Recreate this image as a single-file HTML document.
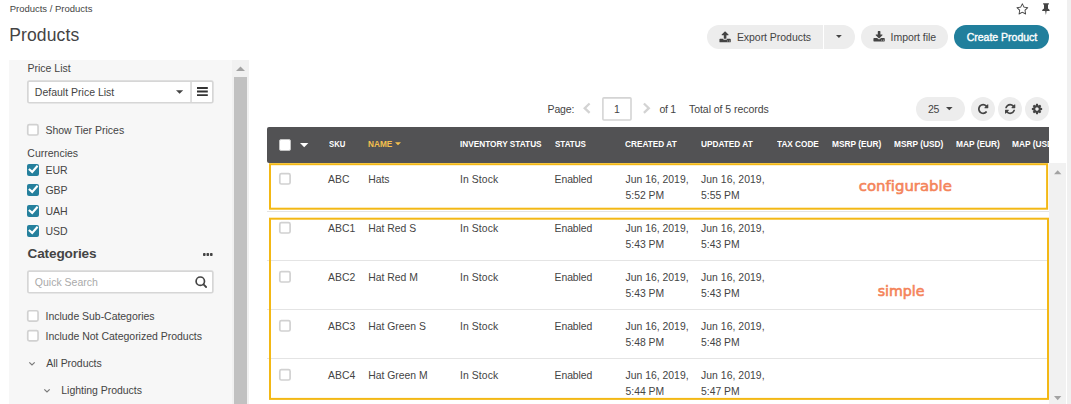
<!DOCTYPE html>
<html lang="en">
<head>
<meta charset="utf-8">
<title>Products</title>
<style>
html,body{margin:0;padding:0;background:#fff;}
body{width:1071px;height:404px;position:relative;overflow:hidden;font-family:"Liberation Sans",Arial,sans-serif;color:#444;}
.t{position:absolute;white-space:nowrap;line-height:1;color:#444;}
.a{position:absolute;box-sizing:border-box;}
.cb{position:absolute;box-sizing:border-box;width:11px;height:11px;border:1px solid #ccc;border-radius:2px;background:#fff;}
.cbc{position:absolute;width:12px;height:12px;border-radius:2px;background:#25809d;}
.sep{position:absolute;left:267px;width:782px;height:1px;background:#e4e4e4;}
.ybox{position:absolute;box-sizing:border-box;border:2px solid #f1b616;}
svg{position:absolute;overflow:visible;}
</style>
</head>
<body>
<!-- right page strip -->
<div class="a" style="left:1067px;top:0;width:4px;height:404px;background:#f0f0f0;"></div>

<!-- sidebar -->
<div class="a" style="left:9px;top:60px;width:223px;height:344px;background:#f7f7f7;"></div>
<div class="a" style="left:232px;top:60px;width:17px;height:344px;background:#f1f1f1;"></div>
<div class="a" style="left:234px;top:77px;width:13px;height:327px;background:#c1c1c1;"></div>
<svg style="left:236px;top:66px" width="9" height="5" viewBox="0 0 9 5"><path d="M0 5L4.5 0.5L9 5Z" fill="#a3a3a3"/></svg>

<!-- price list select -->
<svg style="left:0;top:0" width="260" height="404" viewBox="0 0 260 404"><rect x="27.85" y="81.05" width="185" height="21.7" rx="1.5" fill="#fff" stroke="#d6d6d6" stroke-width="1.7"/><rect x="190.3" y="81" width="1.5" height="22" fill="#d6d6d6"/></svg>

<svg style="left:175.8px;top:90px" width="7.2" height="3.9" viewBox="0 0 10 5"><path d="M0 0H10L5 5Z" fill="#444"/></svg>
<svg style="left:196.5px;top:87.1px" width="10.8" height="9.1" viewBox="0 0 12 10"><path d="M0 0H12V2.1H0ZM0 3.95H12V6.05H0ZM0 7.9H12V10H0Z" fill="#333"/></svg>

<!-- checkboxes -->
<div class="cbc" style="left:27px;top:164px"></div>
<div class="cbc" style="left:27px;top:184px"></div>
<div class="cbc" style="left:27px;top:205px"></div>
<div class="cbc" style="left:27px;top:225px"></div>
<svg style="left:27px;top:164px" width="12" height="73" viewBox="0 0 12 73" fill="none" stroke="#fff" stroke-width="2.1" stroke-linecap="butt" stroke-linejoin="miter">
<path d="M1.9 5L5.2 7.9L10.6 1.8"/>
<path d="M1.9 25L5.2 27.9L10.6 21.8"/>
<path d="M1.9 46L5.2 48.9L10.6 42.8"/>
<path d="M1.9 66L5.2 68.9L10.6 62.8"/>
</svg>

<!-- categories dots -->
<svg style="left:203.4px;top:252.8px" width="9.6" height="3" viewBox="0 0 9.6 3"><rect x="0" y="0" width="2.6" height="3" rx=".8" fill="#444"/><rect x="3.5" y="0" width="2.6" height="3" rx=".8" fill="#444"/><rect x="7" y="0" width="2.6" height="3" rx=".8" fill="#444"/></svg>

<!-- quick search -->
<svg style="left:0;top:0" width="260" height="404" viewBox="0 0 260 404"><rect x="27.85" y="271.05" width="185" height="21.7" rx="1.5" fill="#fff" stroke="#d6d6d6" stroke-width="1.7"/><g fill="none" stroke="#444"><circle cx="200.3" cy="281.2" r="4.2" stroke-width="1.7"/><path d="M203.5 284.4L206.1 287" stroke-width="1.8" stroke-linecap="round"/></g></svg>



<!-- tree chevrons -->
<svg style="left:28.8px;top:361.6px" width="6" height="3.4" viewBox="0 0 6 3.4" fill="none" stroke="#7a7a7a" stroke-width="1.2"><path d="M0.3 0.3L3 3L5.7 0.3"/></svg>
<svg style="left:44.3px;top:388.6px" width="6" height="3.4" viewBox="0 0 6 3.4" fill="none" stroke="#7a7a7a" stroke-width="1.2"><path d="M0.3 0.3L3 3L5.7 0.3"/></svg>

<!-- top right icons -->
<svg style="left:1015.5px;top:2.6px" width="12.7" height="12.7" viewBox="0 0 1792 1792"><path fill="#444" d="M1201 1004l306-297-422-62-189-382-189 382-422 62 306 297-73 421 378-199 377 199zm527-357q0 22-26 48l-363 354 86 500q1 7 1 20 0 50-41 50-19 0-40-12l-449-236-449 236q-22 12-40 12-21 0-31.500-14.500t-10.500-35.500q0-6 2-20l86-500-364-354q-25-27-25-48 0-37 56-46l502-73 225-455q19-41 49-41t49 41l225 455 502 73q56 9 56 46z"/></svg>
<svg style="left:1042.1px;top:3px" width="7.8" height="12" viewBox="0 0 7.8 12"><path fill="#444" d="M1.1 0.3H6.9V1.6H6V5.6Q7.6 6.3 7.8 7.9H4.6L3.9 12L3.2 7.9H0Q0.2 6.3 2 5.6V1.6H1.1Z"/></svg>

<!-- buttons -->
<div class="a" style="left:707px;top:24.7px;width:116px;height:24.3px;background:#ededed;border-radius:12.2px 0 0 12.2px;"></div>
<div class="a" style="left:824px;top:24.7px;width:31px;height:24.3px;background:#ededed;border-radius:0 12.2px 12.2px 0;"></div>
<div class="a" style="left:860.7px;top:24.7px;width:87.4px;height:24.3px;background:#ededed;border-radius:12.2px;"></div>
<div class="a" style="left:953.8px;top:24.7px;width:95.4px;height:24.3px;background:#217f9c;border-radius:12.2px;"></div>
<svg style="left:836.4px;top:35.4px" width="5.8" height="3" viewBox="0 0 10 5"><path d="M0 0H10L5 5Z" fill="#444"/></svg>
<!-- upload icon -->
<svg style="left:719px;top:31px" width="12.2" height="12.2" viewBox="0 0 1792 1792"><path fill="#444" d="M1344 1472q0-26-19-45t-45-19-45 19-19 45 19 45 45 19 45-19 19-45zm256 0q0-26-19-45t-45-19-45 19-19 45 19 45 45 19 45-19 19-45zm128-224v320q0 40-28 68t-68 28h-1472q-40 0-68-28t-28-68v-320q0-40 28-68t68-28h427q21 56 70.500 92t110.500 36h256q61 0 110.500-36t70.500-92h427q40 0 68 28t28 68zm-325-648q-17 40-59 40h-256v448q0 26-19 45t-45 19h-256q-26 0-45-19t-19-45v-448h-256q-42 0-59-40-17-39 14-69l448-448q18-19 45-19t45 19l448 448q31 30 14 69z"/></svg>
<!-- download icon -->
<svg style="left:872.5px;top:30.6px" width="12.2" height="12.2" viewBox="0 0 1792 1792"><path fill="#444" d="M1344 1344q0-26-19-45t-45-19-45 19-19 45 19 45 45 19 45-19 19-45zm256 0q0-26-19-45t-45-19-45 19-19 45 19 45 45 19 45-19 19-45zm128-224v320q0 40-28 68t-68 28h-1472q-40 0-68-28t-28-68v-320q0-40 28-68t68-28h465l135 136q58 56 136 56t136-56l136-136h464q40 0 68 28t28 68zm-325-569q17 41-14 70l-448 448q-18 19-45 19t-45-19l-448-448q-31-29-14-70 17-39 59-39h256v-448q0-26 19-45t45-19h256q26 0 45 19t19 45v448h256q42 0 59 39z"/></svg>

<!-- pagination -->
<svg style="left:575px;top:92px" width="90" height="34" viewBox="575 92 90 34" fill="none">
<path d="M589.6 103.5L584.7 108.2L589.6 112.9" stroke="#d3d3d3" stroke-width="2.3"/>
<path d="M643.9 103.5L648.8 108.2L643.9 112.9" stroke="#d3d3d3" stroke-width="2.3"/>
<rect x="602.9" y="97.85" width="28.1" height="22.2" rx="1" fill="#fff" stroke="#d4d4d4" stroke-width="1.6"/>
</svg>

<!-- toolbar -->
<div class="a" style="left:916px;top:96.8px;width:49px;height:24px;background:#ededed;border-radius:12px;"></div>
<svg style="left:946.2px;top:107.2px" width="6.6" height="3.3" viewBox="0 0 10 5"><path d="M0 0H10L5 5Z" fill="#444"/></svg>
<div class="a" style="left:971px;top:96.7px;width:24px;height:24px;background:#ededed;border-radius:12px;"></div>
<div class="a" style="left:998px;top:96.7px;width:24px;height:24px;background:#ededed;border-radius:12px;"></div>
<div class="a" style="left:1025px;top:96.7px;width:24px;height:24px;background:#ededed;border-radius:12px;"></div>
<svg style="left:977.6px;top:102.6px" width="10.3" height="12" viewBox="0 0 1536 1792"><path fill="#444" d="M1536 256v448q0 26-19 45t-45 19h-448q-42 0-59-40-17-39 14-69l138-138q-148-137-349-137-104 0-198.500 40.500t-163.500 109.500-109.500 163.500-40.500 198.500 40.500 198.500 109.500 163.500 163.500 109.500 198.500 40.500q119 0 225-52t179-147q7-10 23-12 15 0 25 9l137 138q9 8 9.500 20.500t-7.500 22.500q-109 132-264 204.500t-327 72.500q-156 0-298-61t-245-164-164-245-61-298 61-298 164-245 245-164 298-61q147 0 284.500 55.500t244.500 156.500l130-129q29-31 70-14 39 17 39 59z"/></svg>
<svg style="left:1004.9px;top:102.6px" width="10.3" height="12" viewBox="0 0 1536 1792"><path fill="#444" d="M1511 1056q0 5-1 7-64 268-268 434.500t-478 166.500q-146 0-282.500-55t-243.500-157l-129 129q-19 19-45 19t-45-19-19-45v-448q0-26 19-45t45-19h448q26 0 45 19t19 45-19 45l-137 137q71 66 161 102t187 36q134 0 250-65t186-179q11-17 53-117 8-23 30-23h192q13 0 22.500 9.500t9.500 22.500zm25-800v448q0 26-19 45t-45 19h-448q-26 0-45-19t-19-45 19-45l138-138q-148-137-349-137-134 0-250 65t-186 179q-11 17-53 117-8 23-30 23h-199q-13 0-22.500-9.500t-9.500-22.500v-7q65-268 270-434.500t480-166.500q146 0 284 55.500t245 156.500l130-129q19-19 45-19t45 19 19 45z"/></svg>
<svg style="left:1030.9px;top:102.7px" width="12" height="12" viewBox="0 0 1792 1792"><path fill="#444" d="M1152 896q0-106-75-181t-181-75-181 75-75 181 75 181 181 75 181-75 75-181zm512-109v222q0 12-8 23t-20 13l-185 28q-19 54-39 91 35 50 107 138 10 12 10 25t-9 23q-27 37-99 108t-94 71q-12 0-26-9l-138-108q-44 23-91 38-16 136-29 186-7 28-36 28h-222q-14 0-24.500-8.500t-11.500-21.500l-28-184q-49-16-90-37l-141 107q-10 9-25 9-14 0-25-11-126-114-165-168-7-10-7-23 0-12 8-23 15-21 51-66.500t54-70.500q-27-50-41-99l-183-27q-13-2-21-12.500t-8-23.500v-222q0-12 8-23t19-13l186-28q14-46 39-92-40-57-107-138-10-12-10-24 0-10 9-23 26-36 98.500-107.500t94.500-71.500q13 0 26 10l138 107q44-23 91-38 16-136 29-186 7-28 36-28h222q14 0 24.500 8.500t11.500 21.500l28 184q49 16 90 37l142-107q9-9 24-9 13 0 25 10 129 119 165 170 7 8 7 22 0 12-8 23-15 21-51 66.500t-54 70.500q26 50 41 98l183 28q13 2 21 12.500t8 23.500z"/></svg>

<!-- grid header -->
<div class="a" style="left:267px;top:127px;width:782px;height:36px;background:#525254;border-radius:2px 0 0 2px;overflow:hidden;">
</div>
<div class="a" style="left:279px;top:139px;width:12px;height:12px;background:#fff;border:1px solid #c4c4c4;border-radius:2px;"></div>
<svg style="left:299.8px;top:142.7px" width="8.4" height="4.4" viewBox="0 0 10 5"><path d="M0 0H10L5 5Z" fill="#fff"/></svg>
<svg style="left:394.8px;top:142px" width="6" height="3.3" viewBox="0 0 10 5"><path d="M0 0H10L5 5Z" fill="#f5c04e"/></svg>

<!-- grid scrollbar -->
<div class="a" style="left:1049px;top:163px;width:17px;height:241px;background:#f1f1f1;"></div>
<svg style="left:1053.9px;top:169.7px" width="7.4" height="4.5" viewBox="0 0 9 5"><path d="M0 5L4.5 0L9 5Z" fill="#a3a3a3"/></svg>
<svg style="left:1053.9px;top:395.9px" width="7.4" height="4.2" viewBox="0 0 9 5"><path d="M0 0L4.5 5L9 0Z" fill="#a3a3a3"/></svg>

<!-- row separators -->
<div class="sep" style="top:211px"></div>
<div class="sep" style="top:260px"></div>
<div class="sep" style="top:309px"></div>
<div class="sep" style="top:358px"></div>

<!-- row checkboxes -->

<svg style="left:0;top:0" width="300" height="404" viewBox="0 0 300 404" fill="#fff" stroke="#d1d1d1" stroke-width="1.7">
<rect x="27.75" y="124.70" width="10.3" height="10.3" rx="1.6"/>
<rect x="27.75" y="310.75" width="10.3" height="10.3" rx="1.6"/>
<rect x="27.75" y="330.55" width="10.3" height="10.3" rx="1.6"/>
<rect x="279.80" y="173.70" width="10.3" height="10.3" rx="1.6"/>
<rect x="279.80" y="222.70" width="10.3" height="10.3" rx="1.6"/>
<rect x="279.80" y="271.70" width="10.3" height="10.3" rx="1.6"/>
<rect x="279.80" y="320.70" width="10.3" height="10.3" rx="1.6"/>
<rect x="279.80" y="369.70" width="10.3" height="10.3" rx="1.6"/>
</svg>
<!-- yellow annotation boxes -->
<svg style="left:0;top:0" width="1071" height="404" viewBox="0 0 1071 404" fill="none" stroke="#f3b815" stroke-width="2">
<rect x="270" y="164.2" width="777.1" height="44.5"/>
<rect x="270" y="218.7" width="778" height="180.2"/>
</svg>

<span id="t0" class="t" style="left:9.7px;top:4px;font-size:9.5px;letter-spacing:-0.011px;">Products / Products</span>
<span id="t1" class="t" style="left:9.2px;top:27px;font-size:17.5px;letter-spacing:0.130px;">Products</span>
<span id="t2" class="t" style="left:27.5px;top:63px;font-size:10.5px;">Price List</span>
<span id="t3" class="t" style="left:34.8px;top:87px;font-size:10.5px;letter-spacing:0.007px;">Default Price List</span>
<span id="t4" class="t" style="left:45.4px;top:125px;font-size:10.5px;">Show Tier Prices</span>
<span id="t5" class="t" style="left:27.3px;top:148px;font-size:10.5px;">Currencies</span>
<span id="t6" class="t" style="left:45.4px;top:165px;font-size:10.5px;">EUR</span>
<span id="t7" class="t" style="left:45.4px;top:185px;font-size:10.5px;">GBP</span>
<span id="t8" class="t" style="left:45.4px;top:206px;font-size:10.5px;">UAH</span>
<span id="t9" class="t" style="left:45.4px;top:226px;font-size:10.5px;">USD</span>
<span id="t10" class="t" style="left:27.5px;top:247px;font-size:13.6px;letter-spacing:-0.137px;font-weight:bold">Categories</span>
<span id="t11" class="t" style="left:34.8px;top:277px;font-size:10.5px;color:#aaa">Quick Search</span>
<span id="t12" class="t" style="left:45.6px;top:311px;font-size:10.5px;letter-spacing:-0.038px;">Include Sub-Categories</span>
<span id="t13" class="t" style="left:45.6px;top:331px;font-size:10.5px;letter-spacing:-0.019px;">Include Not Categorized Products</span>
<span id="t14" class="t" style="left:46.3px;top:358px;font-size:10.5px;letter-spacing:-0.053px;">All Products</span>
<span id="t15" class="t" style="left:61.3px;top:385px;font-size:10.5px;letter-spacing:-0.032px;">Lighting Products</span>
<span id="t16" class="t" style="left:736.9px;top:32px;font-size:10.5px;letter-spacing:-0.040px;">Export Products</span>
<span id="t17" class="t" style="left:890.6px;top:32px;font-size:10.5px;letter-spacing:-0.064px;">Import file</span>
<span id="t18" class="t" style="left:966.7px;top:32px;font-size:10.5px;letter-spacing:-0.002px;color:#fff;-webkit-text-stroke:0.35px #fff">Create Product</span>
<span id="t19" class="t" style="left:547.5px;top:104px;font-size:10.5px;letter-spacing:-0.111px;">Page:</span>
<span id="t20" class="t" style="left:613.9px;top:104px;font-size:10.5px;">1</span>
<span id="t21" class="t" style="left:659.4px;top:104px;font-size:10.5px;letter-spacing:-0.304px;">of 1</span>
<span id="t22" class="t" style="left:689.0px;top:104px;font-size:10.5px;letter-spacing:-0.047px;">Total of 5 records</span>
<span id="t23" class="t" style="left:927.9px;top:104px;font-size:10.5px;letter-spacing:-0.244px;">25</span>
<span id="t24" class="t" style="left:328.7px;top:140px;font-size:8.6px;transform-origin:0 0;transform:scaleX(0.8978);font-weight:bold;color:#fff">SKU</span>
<span id="t25" class="t" style="left:368.0px;top:140px;font-size:8.6px;transform-origin:0 0;transform:scaleX(0.9600);font-weight:bold;color:#f5c04e">NAME</span>
<span id="t26" class="t" style="left:459.9px;top:140px;font-size:8.6px;transform-origin:0 0;transform:scaleX(0.9600);font-weight:bold;color:#fff">INVENTORY STATUS</span>
<span id="t27" class="t" style="left:554.8px;top:140px;font-size:8.6px;transform-origin:0 0;transform:scaleX(0.9333);font-weight:bold;color:#fff">STATUS</span>
<span id="t28" class="t" style="left:625.0px;top:140px;font-size:8.6px;transform-origin:0 0;transform:scaleX(0.9610);font-weight:bold;color:#fff">CREATED AT</span>
<span id="t29" class="t" style="left:701.1px;top:140px;font-size:8.6px;transform-origin:0 0;transform:scaleX(0.9610);font-weight:bold;color:#fff">UPDATED AT</span>
<span id="t30" class="t" style="left:777.1px;top:140px;font-size:8.6px;transform-origin:0 0;transform:scaleX(0.9551);font-weight:bold;color:#fff">TAX CODE</span>
<span id="t31" class="t" style="left:832.2px;top:140px;font-size:8.6px;transform-origin:0 0;transform:scaleX(0.9679);font-weight:bold;color:#fff">MSRP (EUR)</span>
<span id="t32" class="t" style="left:894.0px;top:140px;font-size:8.6px;transform-origin:0 0;transform:scaleX(0.9659);font-weight:bold;color:#fff">MSRP (USD)</span>
<span id="t33" class="t" style="left:956.0px;top:140px;font-size:8.6px;transform-origin:0 0;transform:scaleX(0.9712);font-weight:bold;color:#fff">MAP (EUR)</span>
<span id="t34" class="t" style="left:1012.1px;top:140px;font-size:8.6px;transform-origin:0 0;transform:scaleX(0.9712);font-weight:bold;color:#fff">MAP (USD)</span>
<span id="t35" class="t" style="left:328.1px;top:175px;font-size:10.4px;">ABC</span>
<span id="t36" class="t" style="left:368.2px;top:175px;font-size:10.4px;">Hats</span>
<span id="t37" class="t" style="left:460.1px;top:175px;font-size:10.4px;letter-spacing:0.069px;">In Stock</span>
<span id="t38" class="t" style="left:554.6px;top:175px;font-size:10.4px;letter-spacing:-0.077px;">Enabled</span>
<span id="t39" class="t" style="left:625.5px;top:175px;font-size:10.4px;letter-spacing:0.009px;">Jun 16, 2019,</span>
<span id="t40" class="t" style="left:625.5px;top:191px;font-size:10.4px;">5:52 PM</span>
<span id="t41" class="t" style="left:701.0px;top:175px;font-size:10.4px;letter-spacing:0.047px;">Jun 16, 2019,</span>
<span id="t42" class="t" style="left:701.0px;top:191px;font-size:10.4px;">5:55 PM</span>
<span id="t43" class="t" style="left:328.1px;top:224px;font-size:10.4px;">ABC1</span>
<span id="t44" class="t" style="left:368.2px;top:224px;font-size:10.4px;">Hat Red S</span>
<span id="t45" class="t" style="left:460.1px;top:224px;font-size:10.4px;letter-spacing:0.069px;">In Stock</span>
<span id="t46" class="t" style="left:554.6px;top:224px;font-size:10.4px;letter-spacing:-0.077px;">Enabled</span>
<span id="t47" class="t" style="left:625.5px;top:224px;font-size:10.4px;letter-spacing:0.009px;">Jun 16, 2019,</span>
<span id="t48" class="t" style="left:625.5px;top:240px;font-size:10.4px;">5:43 PM</span>
<span id="t49" class="t" style="left:701.0px;top:224px;font-size:10.4px;letter-spacing:0.047px;">Jun 16, 2019,</span>
<span id="t50" class="t" style="left:701.0px;top:240px;font-size:10.4px;">5:43 PM</span>
<span id="t51" class="t" style="left:328.1px;top:273px;font-size:10.4px;">ABC2</span>
<span id="t52" class="t" style="left:368.2px;top:273px;font-size:10.4px;">Hat Red M</span>
<span id="t53" class="t" style="left:460.1px;top:273px;font-size:10.4px;letter-spacing:0.069px;">In Stock</span>
<span id="t54" class="t" style="left:554.6px;top:273px;font-size:10.4px;letter-spacing:-0.077px;">Enabled</span>
<span id="t55" class="t" style="left:625.5px;top:273px;font-size:10.4px;letter-spacing:0.009px;">Jun 16, 2019,</span>
<span id="t56" class="t" style="left:625.5px;top:289px;font-size:10.4px;">5:43 PM</span>
<span id="t57" class="t" style="left:701.0px;top:273px;font-size:10.4px;letter-spacing:0.047px;">Jun 16, 2019,</span>
<span id="t58" class="t" style="left:701.0px;top:289px;font-size:10.4px;">5:43 PM</span>
<span id="t59" class="t" style="left:328.1px;top:322px;font-size:10.4px;">ABC3</span>
<span id="t60" class="t" style="left:368.2px;top:322px;font-size:10.4px;">Hat Green S</span>
<span id="t61" class="t" style="left:460.1px;top:322px;font-size:10.4px;letter-spacing:0.069px;">In Stock</span>
<span id="t62" class="t" style="left:554.6px;top:322px;font-size:10.4px;letter-spacing:-0.077px;">Enabled</span>
<span id="t63" class="t" style="left:625.5px;top:322px;font-size:10.4px;letter-spacing:0.009px;">Jun 16, 2019,</span>
<span id="t64" class="t" style="left:625.5px;top:338px;font-size:10.4px;">5:48 PM</span>
<span id="t65" class="t" style="left:701.0px;top:322px;font-size:10.4px;letter-spacing:0.047px;">Jun 16, 2019,</span>
<span id="t66" class="t" style="left:701.0px;top:338px;font-size:10.4px;">5:48 PM</span>
<span id="t67" class="t" style="left:328.1px;top:371px;font-size:10.4px;">ABC4</span>
<span id="t68" class="t" style="left:368.2px;top:371px;font-size:10.4px;">Hat Green M</span>
<span id="t69" class="t" style="left:460.1px;top:371px;font-size:10.4px;letter-spacing:0.069px;">In Stock</span>
<span id="t70" class="t" style="left:554.6px;top:371px;font-size:10.4px;letter-spacing:-0.077px;">Enabled</span>
<span id="t71" class="t" style="left:625.5px;top:371px;font-size:10.4px;letter-spacing:0.009px;">Jun 16, 2019,</span>
<span id="t72" class="t" style="left:625.5px;top:387px;font-size:10.4px;">5:44 PM</span>
<span id="t73" class="t" style="left:701.0px;top:371px;font-size:10.4px;letter-spacing:0.047px;">Jun 16, 2019,</span>
<span id="t74" class="t" style="left:701.0px;top:387px;font-size:10.4px;">5:47 PM</span>
<span id="t75" class="t" style="left:858.8px;top:179px;font-size:14.9px;letter-spacing:0.007px;font-family:'DejaVu Sans',sans-serif;color:#f4845a;-webkit-text-stroke:0.6px #f4845a">configurable</span>
<span id="t76" class="t" style="left:877.7px;top:284px;font-size:14.2px;letter-spacing:-0.024px;font-family:'DejaVu Sans',sans-serif;color:#f4845a;-webkit-text-stroke:0.6px #f4845a">simple</span>
<div class="a" style="left:1049px;top:120px;width:17px;height:43px;background:#fff;"></div>
</body>
</html>
